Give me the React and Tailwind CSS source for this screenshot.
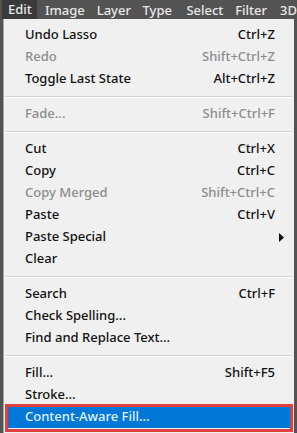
import React from "react";

const rows = [
  { label: "Undo Lasso", key: "Ctrl+Z" },
  { label: "Redo", key: "Shift+Ctrl+Z", off: true },
  { label: "Toggle Last State", key: "Alt+Ctrl+Z" },
  "sep",
  { label: "Fade...", key: "Shift+Ctrl+F", off: true },
  "sep",
  { label: "Cut", key: "Ctrl+X" },
  { label: "Copy", key: "Ctrl+C" },
  { label: "Copy Merged", key: "Shift+Ctrl+C", off: true },
  { label: "Paste", key: "Ctrl+V" },
  { label: "Paste Special", sub: true },
  { label: "Clear" },
  "sep",
  { label: "Search", key: "Ctrl+F" },
  { label: "Check Spelling..." },
  { label: "Find and Replace Text..." },
  "sep",
  { label: "Fill...", key: "Shift+F5" },
  { label: "Stroke..." },
  { label: "Content-Aware Fill...", active: true },
];

export default function App() {
  return (
    <div
      className="w-[297px] h-[433px] overflow-hidden bg-[#535353] flex flex-col"
      style={{ fontFamily: '"Noto Sans", "Open Sans", sans-serif' }}
    >
      <div className="h-[19px] flex items-center pl-[2px] text-[13px] font-medium text-[#e8e8e8] whitespace-nowrap leading-[18px]">
        <span className="bg-[#3a3a3a] w-[35px] h-[19px] pl-[6px]">Edit</span>
        <span className="w-[52px] ml-[8px]">Image</span>
        <span className="w-[46px]">Layer</span>
        <span className="w-[44px]">Type</span>
        <span className="w-[49px]">Select</span>
        <span className="w-[45px]">Filter</span>
        <span>3D</span>
      </div>

      <div className="relative ml-[3px] w-[291px] flex-1 bg-[#f0f0f0] border-l border-[#a8a8a8] pt-[5px] text-[13px] font-medium text-[#111]">
        {rows.map((r, i) =>
          r === "sep" ? (
            <div key={i} className="h-[13px] flex items-center px-[2px]">
              <div className="w-full h-[2px] border-t border-[#d2d2d2] border-b-white border-b" />
            </div>
          ) : (
            <div
              key={i}
              className={`h-[22px] flex items-center justify-between ${
                r.active
                  ? "mx-[3px] pl-[18px] pr-[16px] bg-[#0078d7] text-[#e4efff]"
                  : r.off
                  ? "pl-[21px] pr-[19px] text-[#8c8c8c]"
                  : "pl-[21px] pr-[19px]"
              }`}
            >
              <span>{r.label}</span>
              {r.key && <span>{r.key}</span>}
              {r.sub && (
                <svg width="5" height="9" viewBox="0 0 5 9" className="-mr-[9px]">
                  <path d="M0 0 L5 4.5 L0 9 Z" fill="#111" />
                </svg>
              )}
            </div>
          )
        )}
        <div className="absolute left-[1px] right-[1px] top-[385px] h-[28px] border-[3px] border-[#e0403f]" />
      </div>
    </div>
  );
}
